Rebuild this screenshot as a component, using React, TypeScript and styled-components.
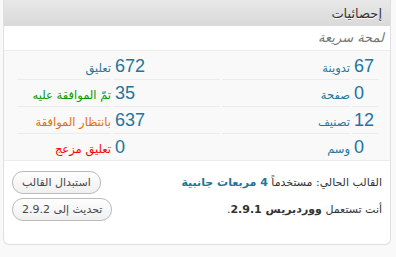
import styled, { createGlobalStyle } from "styled-components";

const GlobalStyle = createGlobalStyle`
  html, body {
    margin: 0;
    padding: 0;
    background: #f9f9f9;
  }
  body {
    font-family: "Liberation Sans", "DejaVu Sans", sans-serif;
  }
`;

interface StatItem {
  count: string;
  label: string;
  tone?: string;
}

const content: StatItem[] = [
  { count: "67", label: "تدوينة" },
  { count: "0", label: "صفحة" },
  { count: "12", label: "تصنيف" },
  { count: "0", label: "وسم" },
];

const discussion: StatItem[] = [
  { count: "672", label: "تعليق" },
  { count: "35", label: "تمّ الموافقة عليه", tone: "#009900" },
  { count: "637", label: "بانتظار الموافقة", tone: "#e66f00" },
  { count: "0", label: "تعليق مزعج", tone: "#ff0000" },
];

export default function App() {
  return (
    <Page>
      <GlobalStyle />
      <Widget dir="rtl">
        <Header>
          <Title>إحصائيات</Title>
        </Header>
        <Sub>لمحة سريعة</Sub>
        <Stats>
          {content.map((c, i) => {
            const d = discussion[i];
            return [
              <NumCell key={`cn${i}`} $first={i === 0}>
                <Count>{c.count}</Count>
              </NumCell>,
              <LabelCell key={`cl${i}`} $first={i === 0}>
                <Label>{c.label}</Label>
              </LabelCell>,
              <NumCell key={`dn${i}`} $first={i === 0}>
                <Count>{d.count}</Count>
              </NumCell>,
              <LabelCell key={`dl${i}`} $first={i === 0}>
                <Label $tone={d.tone}>{d.label}</Label>
              </LabelCell>,
            ];
          })}
        </Stats>
        <Versions>
          <VersionRow>
            <Text>
              القالب الحالي: مستخدماً <Link>4 مربعات جانبية</Link>
            </Text>
            <Button>استبدال القالب</Button>
          </VersionRow>
          <VersionRow>
            <Text>
              أنت تستعمل <b>ووردبريس 2.9.1</b>.
            </Text>
            <Button>تحديث إلى 2.9.2</Button>
          </VersionRow>
        </Versions>
      </Widget>
    </Page>
  );
}

const Page = styled.div`
  padding: 0 5px 0 3px;
`;

const Widget = styled.div`
  width: 386px;
  background: #fff;
  border: 1px solid #dfdfdf;
  border-top: none;
  border-radius: 0 0 6px 6px;
  font-family: "Liberation Sans", "DejaVu Sans", sans-serif;
`;

const Header = styled.div`
  height: 26px;
  display: flex;
  align-items: center;
  padding: 0 8px;
  background: linear-gradient(to bottom, #e8e8e8, #d9d9d9);
`;

const Title = styled.h3`
  margin: 0;
  font-size: 13px;
  font-weight: normal;
  color: #333;
  font-family: "DejaVu Sans", sans-serif;
  text-shadow: 0 1px 0 #fff;
`;

const Sub = styled.p`
  margin: 0;
  height: 24px;
  line-height: 24px;
  padding: 0 6px;
  font-size: 13px;
  font-style: italic;
  color: #777;
  font-family: "DejaVu Sans", sans-serif;
  border-bottom: 1px solid #ececec;
`;

const Stats = styled.div`
  display: grid;
  grid-template-columns: 27px 128px 107px 94px;
  column-gap: 2px;
  padding: 1px 11px 0 12px;
  background: #f9f9f9;
  border-bottom: 1px solid #ececec;
`;

const Cell = styled.div<{ $first?: boolean }>`
  height: 27px;
  box-sizing: border-box;
  border-top: 1px solid ${(p) => (p.$first ? "transparent" : "#ececec")};
  display: flex;
  align-items: center;
`;

const NumCell = styled(Cell)`
  justify-content: flex-end;
  padding-left: 2px;
`;

const LabelCell = styled(Cell)`
  justify-content: flex-start;
  padding-top: 3px;
`;

const Count = styled.span`
  font-size: 18px;
  color: #21759b;
  font-family: "Liberation Sans", sans-serif;
`;

const Label = styled.span<{ $tone?: string }>`
  font-size: 11.5px;
  color: ${(p) => p.$tone ?? "#21759b"};
  font-family: "DejaVu Sans", sans-serif;
`;

const Versions = styled.div`
  display: flex;
  flex-direction: column;
  gap: 4px;
  padding: 10px 8px 23px 8px;
`;

const VersionRow = styled.div`
  display: flex;
  align-items: center;
  justify-content: space-between;
`;

const Text = styled.span`
  font-size: 11px;
  color: #333;
  font-family: "DejaVu Sans", sans-serif;
  b {
    font-weight: bold;
  }
`;

const Link = styled.b`
  color: #21759b;
  font-weight: bold;
`;

const Button = styled.button`
  height: 23px;
  padding: 0 9px;
  border: 1px solid #bbb;
  border-radius: 11px;
  background: linear-gradient(to bottom, #fefefe, #f0f0f0);
  color: #464646;
  font-size: 11px;
  font-family: "DejaVu Sans", sans-serif;
  direction: rtl;
`;
